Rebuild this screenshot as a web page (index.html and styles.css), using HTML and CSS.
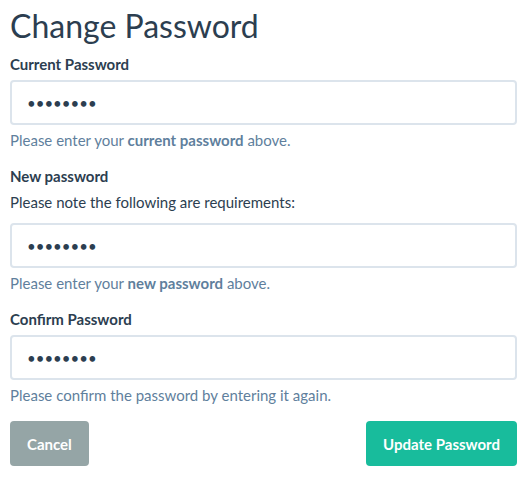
FILE: index.html
```html
<!DOCTYPE html>
<html>
<head>
<meta charset="utf-8">
<link rel="stylesheet" href="styles.css">
</head>
<body>
<form class="page">
  <h1 class="title">Change Password</h1>
  <div class="group">
    <label class="label">Current Password</label>
    <input class="field" type="password" value="12345678">
    <p class="help">Please enter your <strong>current password</strong> above.</p>
  </div>
  <div class="group">
    <label class="label">New password</label>
    <p class="note">Please note the following are requirements:</p>
    <input class="field" type="password" value="12345678">
    <p class="help">Please enter your <strong>new password</strong> above.</p>
  </div>
  <div class="group">
    <label class="label">Confirm Password</label>
    <input class="field" type="password" value="12345678">
    <p class="help">Please confirm the password by entering it again.</p>
  </div>
  <div class="actions">
    <button type="button" class="btn btn-cancel">Cancel</button>
    <button type="button" class="btn btn-update">Update Password</button>
  </div>
</form>
</body>
</html>
```
FILE: styles.css
```css
html, body {
  margin: 0;
  padding: 0;
  background: #ffffff;
}
body {
  font-family: Lato, "Open Sans", "Liberation Sans", sans-serif;
  font-size: 15px;
  line-height: 21px;
  color: #2c3e50;
}
.page {
  padding: 8px 10px 0 10px;
  display: flex;
  flex-direction: column;
}
.title {
  margin: 0 0 10px 0;
  font-size: 32px;
  line-height: 36px;
  font-weight: 400;
  color: #2c3e50;
}
.group {
  display: flex;
  flex-direction: column;
  margin-bottom: 15px;
}
.label {
  font-weight: 700;
  margin-bottom: 5px;
}
.note {
  margin: 0 0 10px 0;
}
.field {
  box-sizing: border-box;
  height: 45px;
  width: 100%;
  padding: 10px 15px;
  border: 2px solid #dce4ec;
  border-radius: 4px;
  font-family: Lato, "Liberation Sans", sans-serif;
  font-size: 15px;
  color: #2c3e50;
  background: #fff;
  outline: none;
}
.help {
  margin: 5px 0 0 0;
  color: #5f7f9d;
}
.help strong {
  font-weight: 700;
}
.actions {
  display: flex;
  justify-content: space-between;
}
.btn {
  height: 45px;
  padding: 0 17px;
  border: none;
  border-radius: 4px;
  font-family: Lato, "Liberation Sans", sans-serif;
  font-size: 15px;
  font-weight: 700;
  color: #fff;
}
.btn-cancel {
  background: #95a5a6;
}
.btn-update {
  background: #18bc9c;
}
```
